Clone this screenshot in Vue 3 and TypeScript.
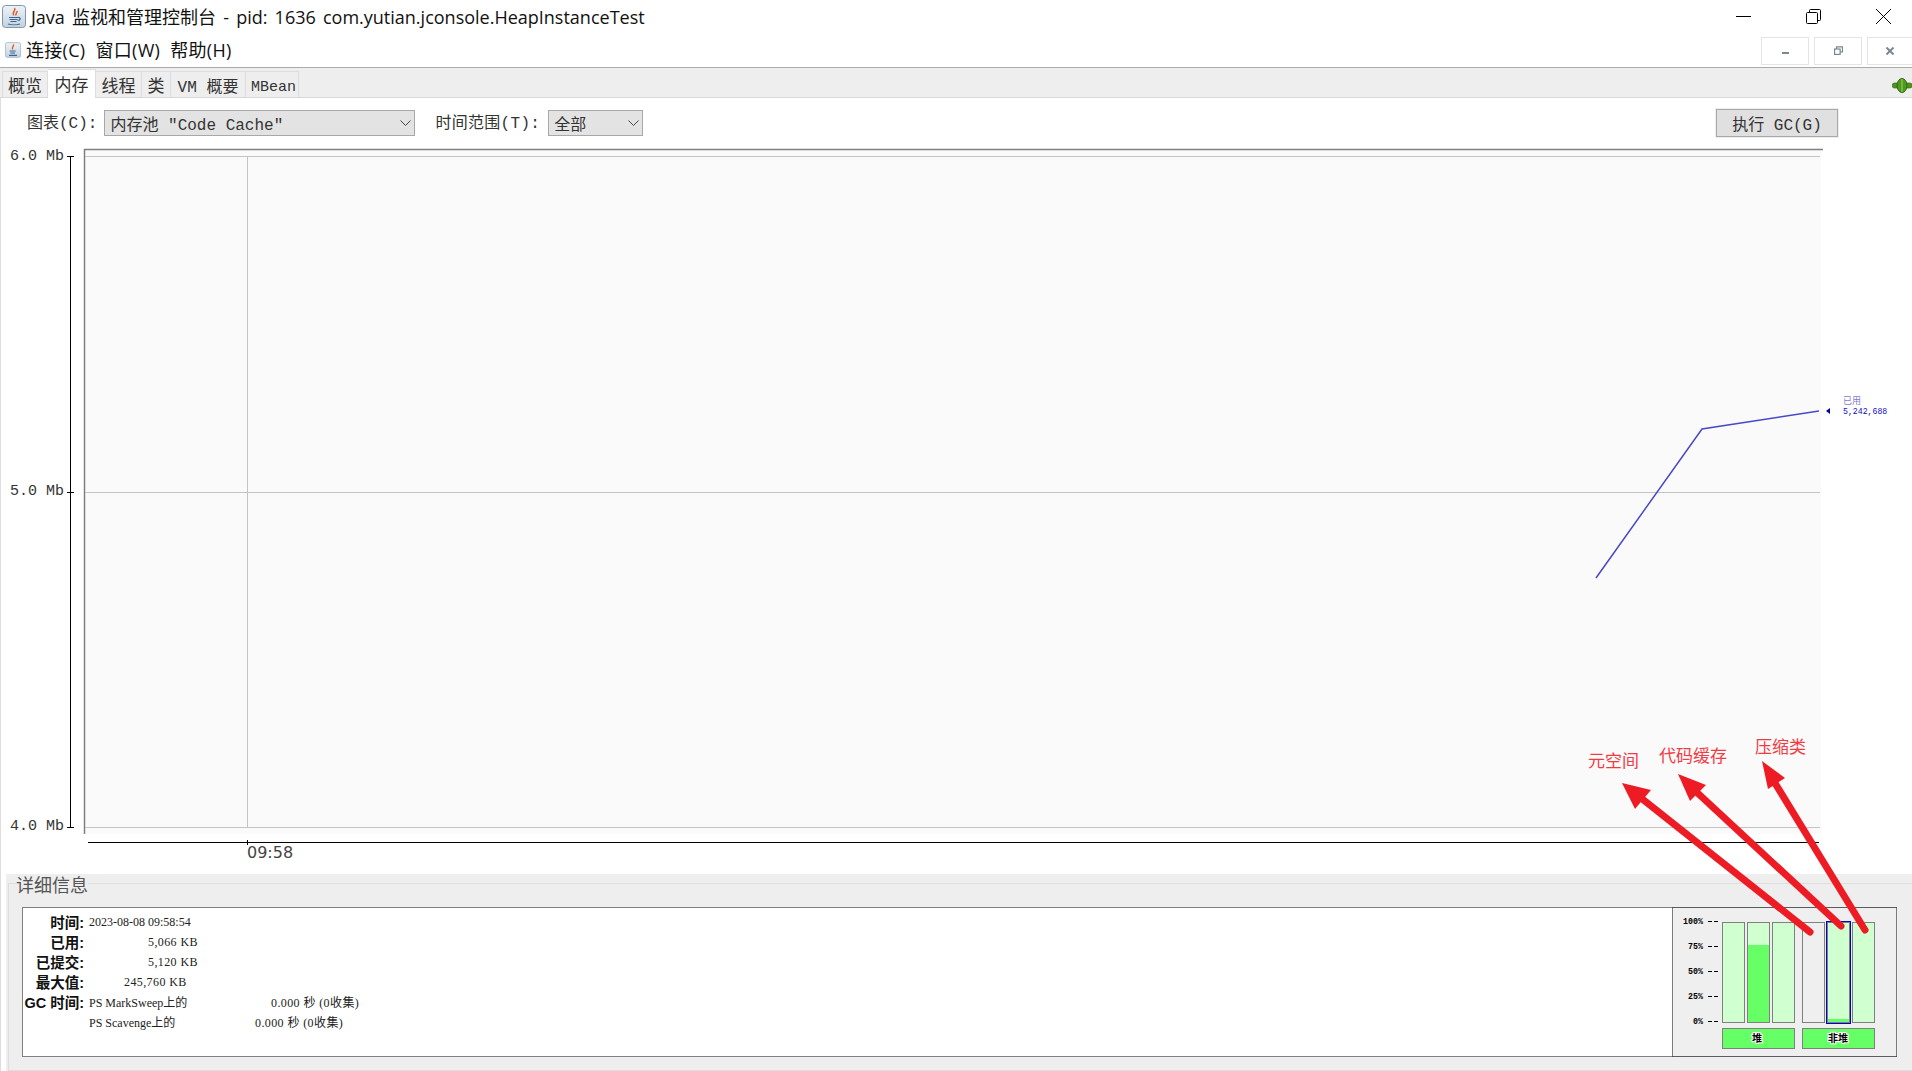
<script setup lang="ts">
const tabs = ["概览", "内存", "线程", "类", "VM 概要", "MBean"];

const details = [
  { label: "时间:", value: "2023-08-08 09:58:54", cls: "" },
  { label: "已用:", value: "5,066 KB", cls: "num v-used" },
  { label: "已提交:", value: "5,120 KB", cls: "num v-used" },
  { label: "最大值:", value: "245,760 KB", cls: "num v-max" },
];

const yLabels = [
  { text: "6.0 Mb", y: 160 },
  { text: "5.0 Mb", y: 495 },
  { text: "4.0 Mb", y: 830 },
];

const percents = [
  { text: "100%", y: 921 },
  { text: "75%", y: 946 },
  { text: "50%", y: 971 },
  { text: "25%", y: 996 },
  { text: "0%", y: 1021 },
];

// x, 填充比例
const bars = [
  { x: 1722, level: 0, light: true },
  { x: 1747, level: 0.77, light: true },
  { x: 1772, level: 0, light: true },
  { x: 1802, level: 0, light: false },
  { x: 1827, level: 0.03, light: true },
  { x: 1852, level: 0, light: true },
];

const arrows = [
  { x1: 1810, y1: 932, x2: 1636, y2: 794 },
  { x1: 1841, y1: 926, x2: 1690, y2: 786 },
  { x1: 1865, y1: 930, x2: 1770, y2: 775 },
];
const heads = [
  "1622,783 1651,790 1635,809",
  "1678,774 1706,785 1690,801",
  "1762,761 1785,778 1768,789",
];
</script>

<template>
  <div class="window">
    <div class="titlebar">
      <svg class="java-icon" width="24" height="23" viewBox="0 0 24 23">
        <defs>
          <linearGradient id="icon-bg" x1="0" y1="0" x2="0" y2="1">
            <stop offset="0" stop-color="#eef2f6" />
            <stop offset="1" stop-color="#c3d2e0" />
          </linearGradient>
        </defs>
        <rect x="0.500" y="0.500" width="23" height="22" rx="3" fill="url(#icon-bg)" stroke="#7f97ad" />
        <path d="M12.500 3c2 2.500-3 4-1 7.500M15 6c.5 2-2 2.500-1 4.500" fill="none" stroke="#dd5a1c" stroke-width="1.500" />
        <path d="M7 12.500h9M7.500 14.500h8M8.500 16.500h6M6 19c3 1 9 1 12 0M16 12.500c3-.5 3 3-.5 3" fill="none" stroke="#3c6690" stroke-width="1.200" />
      </svg>
      <span class="title-text">Java 监视和管理控制台 - pid: 1636 com.yutian.jconsole.HeapInstanceTest</span>
      <div class="win-controls">
        <svg width="15" height="15" viewBox="0 0 15 15"><path d="M0 7.500h15" stroke="#000" /></svg>
        <svg width="15" height="15" viewBox="0 0 15 15" fill="none" stroke="#000">
          <rect x="0.500" y="3.500" width="11" height="11" rx="1" />
          <path d="M3.500 3.500V1.500a1 1 0 0 1 1-1h9a1 1 0 0 1 1 1v9a1 1 0 0 1-1 1h-2" />
        </svg>
        <svg width="15" height="15" viewBox="0 0 15 15"><path d="M0 0l15 15M15 0L0 15" stroke="#000" /></svg>
      </div>
    </div>

    <div class="menubar">
      <svg class="java-icon small" width="16" height="16" viewBox="0 0 24 23">
        <rect x="0.500" y="0.500" width="23" height="22" rx="3" fill="url(#icon-bg)" stroke="#8ea3b8" />
        <path d="M12.500 3c2 2.500-3 4-1 7.500" fill="none" stroke="#dd5a1c" stroke-width="2" />
        <path d="M7 13h9M8 16h7M6 19.500h12" fill="none" stroke="#3c6690" stroke-width="1.800" />
      </svg>
      <span class="menu-item">连接(C)</span>
      <span class="menu-item">窗口(W)</span>
      <span class="menu-item">帮助(H)</span>
      <div class="inner-controls">
        <button class="inner-btn"><i class="glyph-min"></i></button>
        <button class="inner-btn">
          <svg width="9" height="9" viewBox="0 0 9 9" fill="none" stroke="#7c8794" stroke-width="1.200">
            <rect x="0.600" y="3" width="5.500" height="5.400" />
            <path d="M2.500 3V0.800h6v5H6" />
          </svg>
        </button>
        <button class="inner-btn">
          <svg width="8" height="8" viewBox="0 0 8 8"><path d="M0.500 0.500l7 7M7.500 0.500l-7 7" stroke="#7c8794" stroke-width="2" /></svg>
        </button>
      </div>
    </div>

    <div class="tabbar">
      <span v-for="(t, i) in tabs" :key="t" class="tab" :class="['tab-' + i, { active: i === 1 }]">{{ t }}</span>
      <svg class="plug" width="20" height="15" viewBox="0 0 20 15">
        <rect x="0.300" y="5" width="19.700" height="5" rx="2" fill="#4f9420" stroke="#2f5f10" stroke-width="0.600" />
        <ellipse cx="10" cy="7.500" rx="5" ry="7" fill="#4f9a1e" stroke="#2f6a10" />
        <path d="M10 1v13" stroke="#9ad45c" />
      </svg>
    </div>

    <div class="controls">
      <span class="ctl-label first">图表(C):</span>
      <div class="combo combo-chart">
        <span>内存池 "Code Cache"</span>
        <svg width="11" height="7" viewBox="0 0 11 7"><path d="M0.500 0.500l5 5 5-5" fill="none" stroke="#444" /></svg>
      </div>
      <span class="ctl-label second">时间范围(T):</span>
      <div class="combo combo-range">
        <span>全部</span>
        <svg width="11" height="7" viewBox="0 0 11 7"><path d="M0.500 0.500l5 5 5-5" fill="none" stroke="#444" /></svg>
      </div>
      <button class="gc-btn">执行 GC(G)</button>
    </div>

    <svg class="chart" width="1912" height="731" viewBox="0 143 1912 731">
      <rect x="84" y="150" width="1737" height="684" fill="#fafafa" />
      <path d="M84 149.500H1823M84.500 149V834" stroke="#7f7f7f" stroke-width="1.500" fill="none" />
      <path d="M85 156.500H1820M85 492.500H1820M85 827.500H1820M247.500 156V827" stroke="#c4c4c4" fill="none" />
      <path d="M70.500 156V827M67 156.500H74M67 492.500H74M67 827.500H74" stroke="#000" fill="none" />
      <text v-for="l in yLabels" :key="l.text" x="10" :y="l.y" class="axis-text">{{ l.text }}</text>
      <path d="M88 842.500H1819M247.500 840V845" stroke="#000" fill="none" />
      <text x="247" y="858" class="time-text">09:58</text>
      <polyline points="1596,578 1702,429 1819,411" fill="none" stroke="#4848c8" stroke-width="1.500" />
      <path d="M1826 411l4-3v6z" fill="#0000b0" />
      <text x="1843" y="404" class="used-label">已用</text>
      <text x="1843" y="414" class="used-value">5,242,688</text>
    </svg>

    <fieldset class="details">
      <legend>详细信息</legend>
      <div class="detail-box">
        <div class="info">
          <div v-for="d in details" :key="d.label" class="info-row">
            <b class="info-label">{{ d.label }}</b>
            <span :class="d.cls">{{ d.value }}</span>
          </div>
          <div class="info-row">
            <b class="info-label">GC 时间:</b>
            <span class="gc-name">PS MarkSweep上的</span>
            <span class="gc-val g1">0.000 秒 (0收集)</span>
          </div>
          <div class="info-row">
            <b class="info-label"></b>
            <span class="gc-name">PS Scavenge上的</span>
            <span class="gc-val g2">0.000 秒 (0收集)</span>
          </div>
        </div>
        <svg class="gauge" width="225" height="150" viewBox="1672 907 225 150">
          <rect x="1672.500" y="907.500" width="224" height="149" fill="#efefef" stroke="#000" stroke-dasharray="1 1" />
          <g v-for="p in percents" :key="p.text">
            <text x="1703" :y="p.y + 3" text-anchor="end" class="pct">{{ p.text }}</text>
            <path :d="`M1708 ${p.y + 0.500}h4M1714 ${p.y + 0.500}h4`" stroke="#000" />
          </g>
          <g v-for="b in bars" :key="b.x">
            <rect :x="b.x + 0.500" y="922.500" width="22" height="100" :fill="b.light ? '#d0ffd0' : '#efefef'" stroke="#808080" />
            <rect
              v-if="b.level > 0"
              :x="b.x + 1"
              :y="1022 - b.level * 100"
              width="21"
              :height="b.level * 100"
              fill="#66ff66"
            />
          </g>
          <rect x="1826.500" y="921.500" width="24" height="102" fill="none" stroke="#0000d0" />
          <rect x="1722.500" y="1028.500" width="72" height="20" fill="#66ff66" stroke="#808080" />
          <rect x="1802.500" y="1028.500" width="72" height="20" fill="#66ff66" stroke="#808080" />
          <text x="1757" y="1042" text-anchor="middle" class="heap">堆</text>
          <text x="1838" y="1042" text-anchor="middle" class="heap">非堆</text>
        </svg>
      </div>
    </fieldset>

    <svg class="annotations" width="1912" height="1071" viewBox="0 0 1912 1071">
      <path d="M0.500 98V1071" stroke="#ddd" />
      <line
        v-for="a in arrows"
        :key="a.x1"
        :x1="a.x1"
        :y1="a.y1"
        :x2="a.x2"
        :y2="a.y2"
        stroke="#ed1c24"
        stroke-width="7"
        stroke-linecap="round"
      />
      <polygon v-for="h in heads" :key="h" :points="h" fill="#ed1c24" />
    </svg>
    <span class="note n1">元空间</span>
    <span class="note n2">代码缓存</span>
    <span class="note n3">压缩类</span>
  </div>
</template>

<style>
html,
body {
  margin: 0;
  background: #fff;
}
</style>

<style scoped>
.window {
  position: relative;
  width: 1912px;
  height: 1071px;
  overflow: hidden;
  display: flex;
  flex-direction: column;
  background: #fff;
  font-family: "Liberation Mono", "Noto Sans CJK SC", monospace;
  color: #333;
}
.titlebar {
  height: 34px;
  display: flex;
  align-items: center;
  padding-left: 2px;
  padding-bottom: 1px;
  box-sizing: border-box;
}
.title-text {
  margin-left: 5px;
  margin-bottom: 1px;
  font: 18px "Open Sans", "Noto Sans CJK SC", sans-serif;
  word-spacing: 2.5px;
  color: #111;
  white-space: nowrap;
}
.win-controls {
  margin-left: auto;
  display: flex;
  gap: 55px;
  padding-right: 21px;
}
.win-controls svg {
  display: block;
}
.menubar {
  height: 33px;
  display: flex;
  align-items: center;
  padding-left: 5px;
  box-sizing: border-box;
  font: 18px "Open Sans", "Noto Sans CJK SC", sans-serif;
  color: #111;
}
.java-icon.small {
  margin-bottom: 1px;
}
.menu-item {
  margin-left: 5px;
  margin-right: 5px;
  margin-bottom: 4px;
  letter-spacing: 0.3px;
  white-space: nowrap;
}
.inner-controls {
  margin-left: auto;
  display: flex;
  gap: 5px;
  margin-right: 0;
}
.inner-btn {
  width: 48px;
  height: 28px;
  padding: 0;
  background: #fff;
  border: 1px solid #e4e4e4;
  display: flex;
  align-items: center;
  justify-content: center;
}
.inner-btn:last-child {
  width: 45px;
  border-right: 0;
}
.glyph-min {
  display: block;
  width: 7px;
  height: 2px;
  margin-top: 4px;
  background: #7c8794;
}
.tabbar {
  position: relative;
  height: 31px;
  box-sizing: border-box;
  display: flex;
  align-items: flex-end;
  padding-left: 2px;
  background: #eee;
  border-top: 1px solid #aaa;
  border-bottom: 1px solid #d8d8d8;
  font-size: 17px;
}
.tab {
  height: 26px;
  box-sizing: border-box;
  display: flex;
  align-items: center;
  justify-content: center;
  border: 1px solid #ddd;
  border-bottom: 0;
  border-left: 0;
  margin-bottom: 0;
  white-space: pre;
}
.tab-0 {
  width: 46px;
  border-left: 1px solid #ddd;
}
.tab-1 {
  width: 48px;
}
.tab-2 {
  width: 46px;
}
.tab-3 {
  width: 29px;
}
.tab-4 {
  width: 75px;
  font-size: 16px;
}
.tab-5 {
  width: 53px;
  font-size: 15px;
  padding: 5px 0 0 3px;
}
.tab.active {
  height: 29px;
  background: #fff;
  margin-bottom: -1px;
  padding-bottom: 2px;
}
.plug {
  position: absolute;
  right: 0;
  top: 10px;
}
.controls {
  height: 45px;
  box-sizing: border-box;
  padding: 12px 74px 0 27px;
  display: flex;
  align-items: flex-start;
  font-size: 16px;
}
.ctl-label {
  height: 26px;
  line-height: 26px;
  padding-top: 1px;
  white-space: nowrap;
}
.combo {
  height: 26px;
  box-sizing: border-box;
  border: 1px solid #a8a8a8;
  background: #e3e3e3;
  display: flex;
  align-items: center;
  justify-content: space-between;
  padding: 0 3px 0 5px;
  white-space: nowrap;
}
.combo-chart {
  width: 311px;
  margin-left: 7px;
}
.ctl-label.second {
  margin-left: 20px;
  letter-spacing: 0.3px;
}
.combo-range {
  width: 95px;
  margin-left: 8px;
}
.gc-btn {
  margin-left: auto;
  width: 122px;
  height: 28px;
  margin-top: -1px;
  padding: 0;
  font: inherit;
  color: #333;
  background: #e0e0e0;
  border: 1px solid #a8a8a8;
  outline: 1px solid #eee;
}
.chart {
  display: block;
  flex: none;
}
.axis-text {
  font: 15px "Liberation Mono", monospace;
  fill: #333;
}
.time-text {
  font: 16px "DejaVu Sans", sans-serif;
  fill: #444;
}
.used-label {
  font: 9px "Noto Sans CJK SC", sans-serif;
  fill: #7d7dc8;
}
.used-value {
  font: 8.2px "Liberation Mono", monospace;
  fill: #1010c0;
}
.details {
  flex: 1;
  min-height: 0;
  margin: 0;
  margin-left: 6px;
  box-sizing: border-box;
  background: #eee;
  border: 0;
  position: relative;
  display: block;
  padding: 33px 0 14px 16px;
}
.details::before {
  content: "";
  position: absolute;
  left: 2px;
  right: 0;
  top: 9px;
  bottom: 0;
  border: 1px solid #ddd;
  border-right: 0;
}
.details legend {
  position: absolute;
  left: 10px;
  top: 0;
  padding: 0;
  z-index: 1;
  background: #eee;
  font: 18px "Noto Sans CJK SC", sans-serif;
  color: #555;
  line-height: 20px;
}
.detail-box {
  position: relative;
  height: 150px;
  width: 1875px;
  box-sizing: border-box;
  background: #fff;
  border: 1px solid #808080;
  border-right: 0;
  display: flex;
}
.info {
  padding-top: 4px;
  flex: 1;
  font: 12px "Liberation Serif", "Noto Sans CJK SC", serif;
  color: #222;
}
.info-row {
  height: 20px;
  display: flex;
  align-items: center;
  white-space: nowrap;
}
.info-label {
  width: 61px;
  margin-right: 5px;
  margin-bottom: 2px;
  text-align: right;
  font: bold 14.5px "Liberation Sans", "Noto Sans CJK SC", sans-serif;
  color: #111;
}
.num,
.gc-val {
  letter-spacing: 0.4px;
}
.v-used {
  margin-left: 59px;
}
.v-max {
  margin-left: 35px;
}
.gc-name {
  width: 100px;
}
.g1 {
  margin-left: 82px;
}
.g2 {
  margin-left: 66px;
}
.gauge {
  display: block;
  margin-top: -1px;
  flex: none;
}
.pct {
  font: bold 8.3px "Liberation Mono", monospace;
  fill: #000;
}
.heap {
  font: bold 10px "Noto Sans CJK SC", sans-serif;
  fill: #000;
  stroke: #fff;
  stroke-width: 2px;
  paint-order: stroke;
}
.annotations {
  position: absolute;
  left: 0;
  top: 0;
  pointer-events: none;
}
.note {
  position: absolute;
  font: 17px "Noto Sans CJK SC", sans-serif;
  line-height: 20px;
  color: #f23a45;
  white-space: nowrap;
}
.n1 {
  left: 1588px;
  top: 750px;
}
.n2 {
  left: 1659px;
  top: 745px;
}
.n3 {
  left: 1755px;
  top: 736px;
}
</style>
